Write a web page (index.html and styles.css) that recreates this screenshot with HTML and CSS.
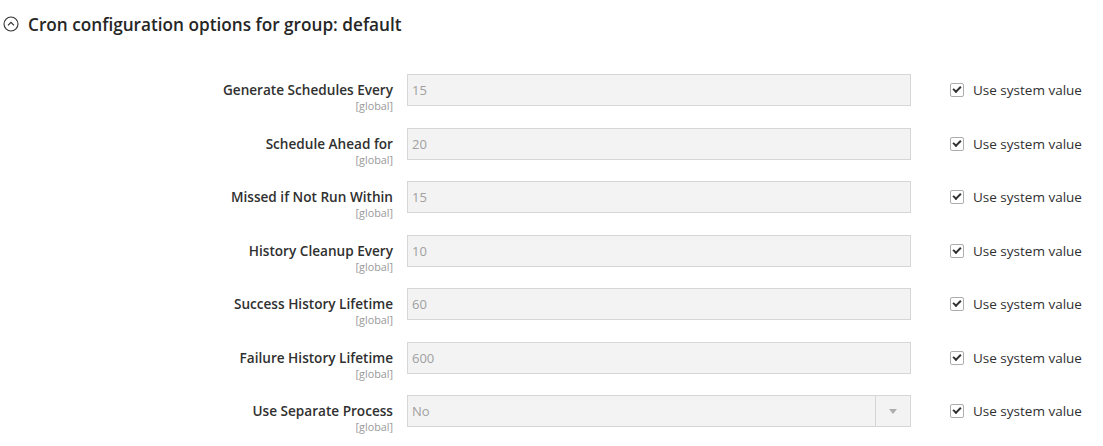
FILE: index.html
```html
<!DOCTYPE html>
<html lang="en">
<head>
    <meta charset="UTF-8">
    <title>Cron configuration</title>
    <link rel="stylesheet" href="styles.css">
</head>
<body>
    <div class="section">
        <div class="section-title">
            <svg class="toggle" width="16" height="16" viewBox="0 0 16 16">
                <circle cx="8" cy="8" r="7" fill="none" stroke="#303030" stroke-width="1.1"/>
                <path d="M5 9.3 L8 6.3 L11 9.3" fill="none" stroke="#303030" stroke-width="1.2"/>
            </svg>
            <span>Cron configuration options for group: default</span>
        </div>

        <div class="config">
            <div class="label">Generate Schedules Every<span class="scope">[global]</span></div>
            <div class="value"><input type="text" value="15" disabled></div>
            <label class="inherit"><span class="check"></span>Use system value</label>

            <div class="label">Schedule Ahead for<span class="scope">[global]</span></div>
            <div class="value"><input type="text" value="20" disabled></div>
            <label class="inherit"><span class="check"></span>Use system value</label>

            <div class="label">Missed if Not Run Within<span class="scope">[global]</span></div>
            <div class="value"><input type="text" value="15" disabled></div>
            <label class="inherit"><span class="check"></span>Use system value</label>

            <div class="label">History Cleanup Every<span class="scope">[global]</span></div>
            <div class="value"><input type="text" value="10" disabled></div>
            <label class="inherit"><span class="check"></span>Use system value</label>

            <div class="label">Success History Lifetime<span class="scope">[global]</span></div>
            <div class="value"><input type="text" value="60" disabled></div>
            <label class="inherit"><span class="check"></span>Use system value</label>

            <div class="label">Failure History Lifetime<span class="scope">[global]</span></div>
            <div class="value"><input type="text" value="600" disabled></div>
            <label class="inherit"><span class="check"></span>Use system value</label>

            <div class="label">Use Separate Process<span class="scope">[global]</span></div>
            <div class="value">
                <div class="select">
                    <span>No</span>
                    <span class="arrow"></span>
                </div>
            </div>
            <label class="inherit"><span class="check"></span>Use system value</label>
        </div>
    </div>
</body>
</html>
```

FILE: styles.css
```css
html, body {
    min-height: 446px;
}

body {
    font-family: "Open Sans", Arial, sans-serif;
    margin: 0;
    padding: 0;
    color: #303030;
    background: #fff;
}

.section {
    padding-top: 14px;
    padding-bottom: 20px;
}

.section-title {
    display: flex;
    align-items: center;
    height: 20px;
    padding-left: 3px;
    font-size: 17.2px;
    font-weight: 600;
    color: #262626;
}

.section-title .toggle {
    margin-right: 9px;
}

.config {
    display: grid;
    grid-template-columns: 393px 504px auto;
    grid-auto-rows: 32px;
    column-gap: 14px;
    row-gap: 21.5px;
    margin-top: 40px;
}

.label {
    text-align: right;
    font-size: 13.6px;
    font-weight: 600;
    line-height: 18px;
    padding-top: 7px;
}

.scope {
    display: block;
    font-size: 10.8px;
    font-weight: 400;
    color: #999;
    line-height: 12px;
    margin-top: 1px;
}

.value input,
.value .select {
    box-sizing: border-box;
    width: 504px;
    height: 32px;
    margin: 0;
    padding: 0 4px;
    border: 1px solid #d6d6d6;
    background: #f3f3f3;
    font-family: "Open Sans", Arial, sans-serif;
    font-size: 13px;
    color: #a0a0a0;
}

.value .select {
    display: flex;
    align-items: center;
    justify-content: space-between;
    padding-right: 0;
}

.select .arrow {
    width: 34px;
    height: 30px;
    border-left: 1px solid #d6d6d6;
    position: relative;
}

.select .arrow::after {
    content: "";
    position: absolute;
    left: 13px;
    top: 13px;
    border-left: 4px solid transparent;
    border-right: 4px solid transparent;
    border-top: 5px solid #adadad;
}

.inherit {
    display: flex;
    align-items: center;
    margin-left: 25px;
    font-size: 13.5px;
    color: #303030;
    height: 32px;
}

.check {
    box-sizing: border-box;
    width: 14px;
    height: 14px;
    border: 1px solid #adadad;
    border-radius: 2px;
    margin-right: 9px;
    position: relative;
    background: #fff;
}

.check::after {
    content: "";
    position: absolute;
    top: 2px;
    left: 2px;
    width: 6px;
    height: 3px;
    border-left: 2px solid #303030;
    border-bottom: 2px solid #303030;
    transform: rotate(-45deg);
}
```
